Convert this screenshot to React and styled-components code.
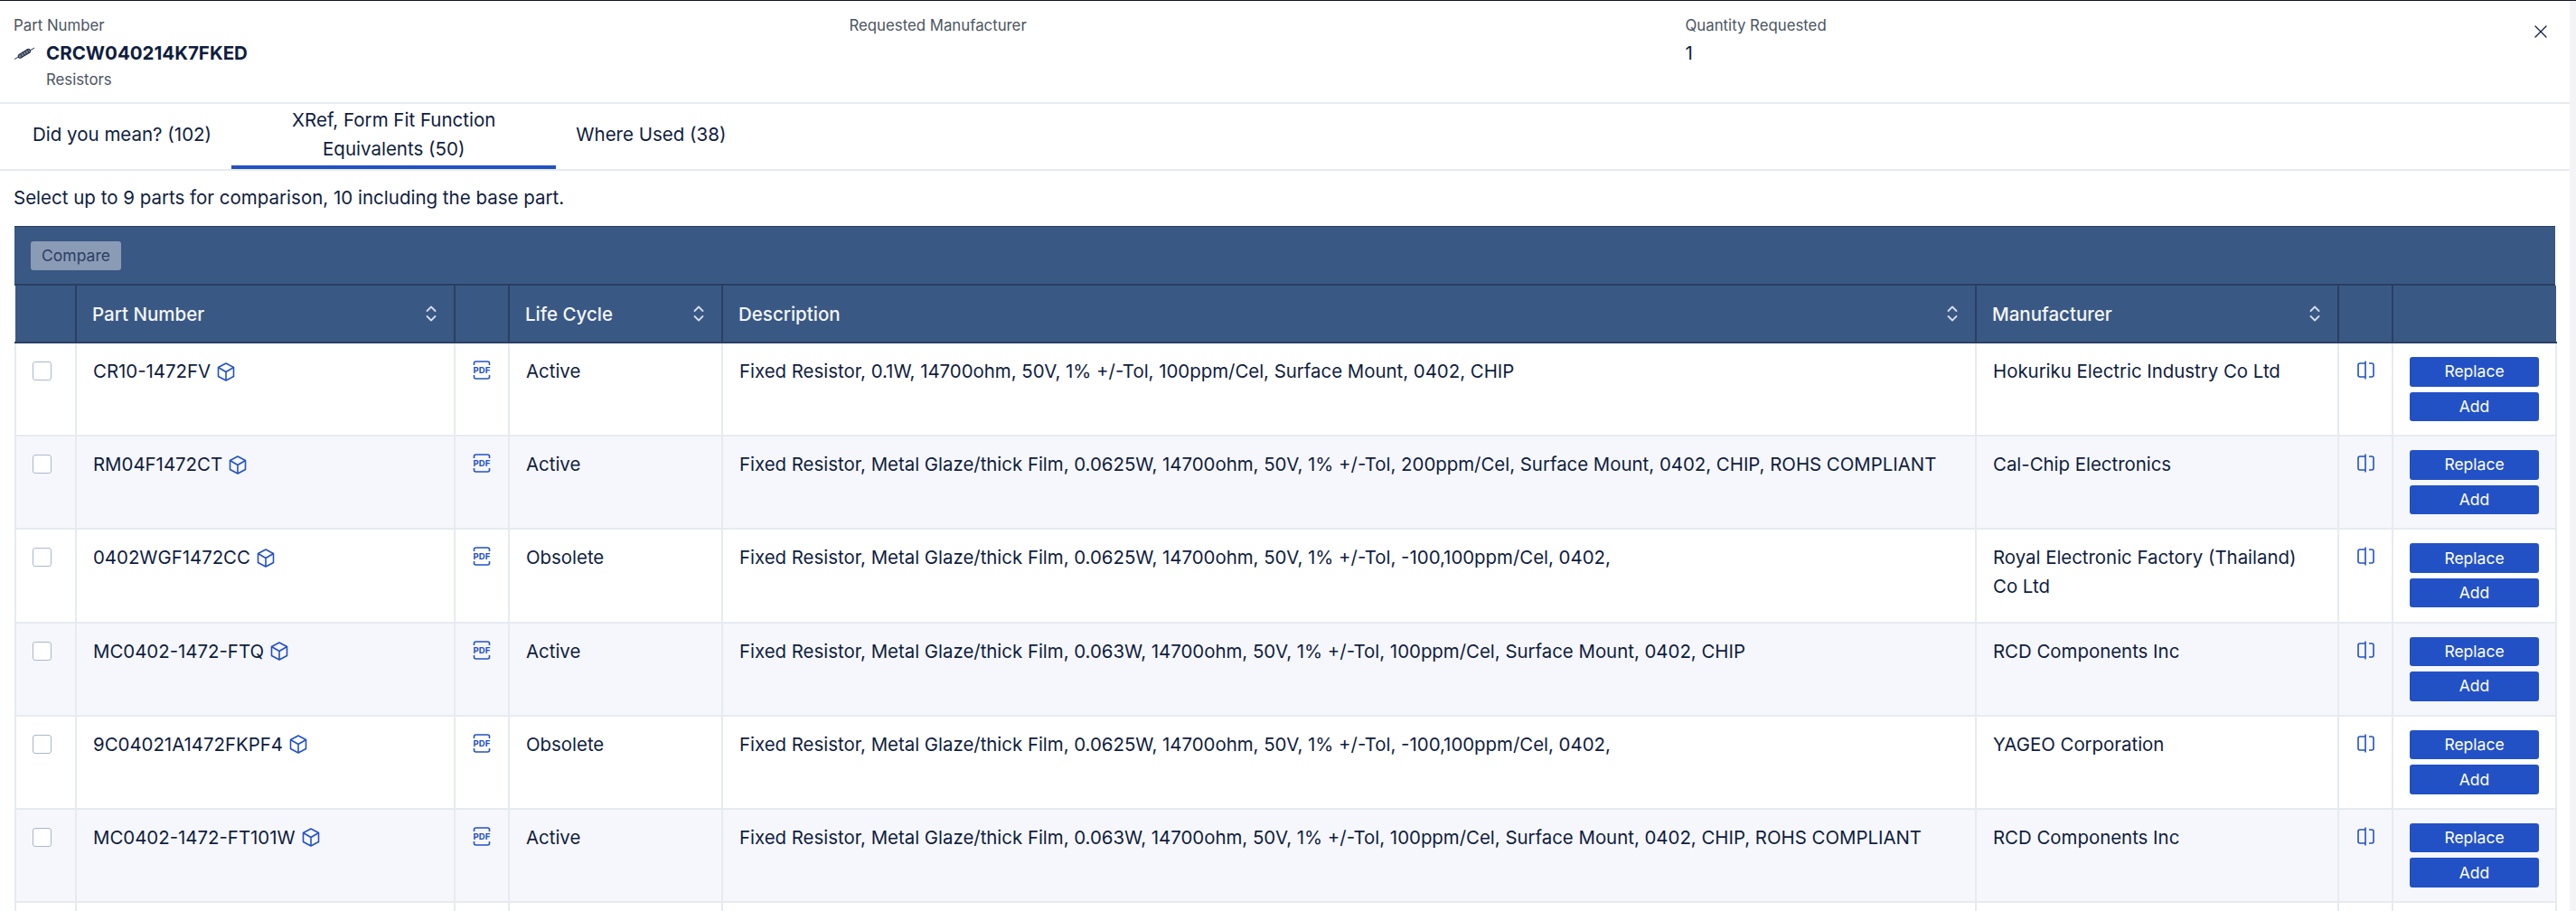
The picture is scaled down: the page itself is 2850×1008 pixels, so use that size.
import React from 'react'
import styled, { createGlobalStyle } from 'styled-components'
import { X } from 'lucide-react'

const parts = [
    { id: 1, part: 'CR10-1472FV', cycle: 'Active', desc: 'Fixed Resistor, 0.1W, 14700ohm, 50V, 1% +/-Tol, 100ppm/Cel, Surface Mount, 0402, CHIP', maker: 'Hokuriku Electric Industry Co Ltd' },
    { id: 2, part: 'RM04F1472CT', cycle: 'Active', desc: 'Fixed Resistor, Metal Glaze/thick Film, 0.0625W, 14700ohm, 50V, 1% +/-Tol, 200ppm/Cel, Surface Mount, 0402, CHIP, ROHS COMPLIANT', maker: 'Cal-Chip Electronics' },
    { id: 3, part: '0402WGF1472CC', cycle: 'Obsolete', desc: 'Fixed Resistor, Metal Glaze/thick Film, 0.0625W, 14700ohm, 50V, 1% +/-Tol, -100,100ppm/Cel, 0402,', maker: 'Royal Electronic Factory (Thailand) Co Ltd' },
    { id: 4, part: 'MC0402-1472-FTQ', cycle: 'Active', desc: 'Fixed Resistor, Metal Glaze/thick Film, 0.063W, 14700ohm, 50V, 1% +/-Tol, 100ppm/Cel, Surface Mount, 0402, CHIP', maker: 'RCD Components Inc' },
    { id: 5, part: '9C04021A1472FKPF4', cycle: 'Obsolete', desc: 'Fixed Resistor, Metal Glaze/thick Film, 0.0625W, 14700ohm, 50V, 1% +/-Tol, -100,100ppm/Cel, 0402,', maker: 'YAGEO Corporation' },
    { id: 6, part: 'MC0402-1472-FT101W', cycle: 'Active', desc: 'Fixed Resistor, Metal Glaze/thick Film, 0.063W, 14700ohm, 50V, 1% +/-Tol, 100ppm/Cel, Surface Mount, 0402, CHIP, ROHS COMPLIANT', maker: 'RCD Components Inc' },
]

const columns = [67, 419, 60, 236, 1387, 401, 60, 181]

const ResistorIcon = () => (
    <svg width="24" height="16" viewBox="0 0 24 16" fill="none" stroke="#26314d">
        <path d="M1 14.500L6 11.500M18 5L23 2" strokeWidth="1" />
        <path d="M6 9.500L15.500 3.500C18 2.800 19.500 5.500 18 7L8 13C5.500 14 4.500 11 6 9.500Z" fill="#7f889c" strokeWidth="1.200" />
        <path d="M7.500 8.500L9.500 12.200M10 6.800L12 10.600M12.500 5.200L14.500 9M15 3.800L17 7.500" strokeWidth="1.100" />
    </svg>
)

const CubeIcon = () => (
    <svg width="20" height="21" viewBox="0 0 20 21" fill="none" stroke="#2251c5" strokeWidth="1.600" strokeLinejoin="round">
        <path d="M10 1L18.500 5.500V15.500L10 20L1.500 15.500V5.500Z" />
        <path d="M1.500 5.500L10 10.500L18.500 5.500M10 10.500V20" />
    </svg>
)

const PdfIcon = () => (
    <svg width="20" height="21" viewBox="0 0 20 21" fill="none">
        <path d="M1.500 5V3C1.500 1.800 2.300 1 3.500 1H16.500C17.700 1 18.500 1.800 18.500 3V5M1.500 16V18C1.500 19.200 2.300 20 3.500 20H16.500C17.700 20 18.500 19.200 18.500 18V16" stroke="#2251c5" strokeWidth="1.600" />
        <text x="10" y="14" textAnchor="middle" fontFamily="Inter, sans-serif" fontSize="9.600" fontWeight="700" fill="#2251c5">PDF</text>
    </svg>
)

const CompareIcon = () => (
    <svg width="19" height="21" viewBox="0 0 19 21" fill="none" stroke="#2251c5" strokeWidth="1.600">
        <path d="M9 3H3C1.800 3 1 3.800 1 5V16C1 17.200 1.800 18 3 18H9M9 0.500V20.500" />
        <path d="M13 3H16C17.200 3 18 3.800 18 5V16C18 17.200 17.200 18 16 18H13" />
    </svg>
)

const SortIcon = () => (
    <svg width="14" height="20" viewBox="0 0 14 20" fill="none" stroke="#d5deec" strokeWidth="1.800" strokeLinecap="round" strokeLinejoin="round">
        <path d="M2.500 7L7 2.500L11.500 7M2.500 13L7 17.500L11.500 13" />
    </svg>
)

const App = () => {
    return <Page>
        <GlobalStyle />
        <TopLine />
        <Modal>
            <Summary>
                <SummaryColumn>
                    <FieldLabel>Part Number</FieldLabel>
                    <PartLine>
                        <ResistorIcon />
                        <PartName>CRCW040214K7FKED</PartName>
                    </PartLine>
                    <Category>Resistors</Category>
                </SummaryColumn>
                <SummaryColumn>
                    <FieldLabel>Requested Manufacturer</FieldLabel>
                </SummaryColumn>
                <SummaryColumn>
                    <FieldLabel>Quantity Requested</FieldLabel>
                    <Quantity>1</Quantity>
                </SummaryColumn>
                <CloseButton><X size={24} strokeWidth={1.300} /></CloseButton>
            </Summary>

            <Tabs>
                <Tab>Did you mean? (102)</Tab>
                <Tab $active>XRef, Form Fit Function<br />Equivalents (50)</Tab>
                <Tab>Where Used (38)</Tab>
            </Tabs>

            <Hint>Select up to 9 parts for comparison, 10 including the base part.</Hint>

            <TableWrap>
                <Toolbar>
                    <CompareButton>Compare</CompareButton>
                </Toolbar>
                <Table>
                    <colgroup>
                        {columns.map((width, i) => <col key={i} style={{ width }} />)}
                    </colgroup>
                    <thead>
                        <tr>
                            <HeadCell />
                            <HeadCell><HeadInner>Part Number<SortIcon /></HeadInner></HeadCell>
                            <HeadCell />
                            <HeadCell><HeadInner>Life Cycle<SortIcon /></HeadInner></HeadCell>
                            <HeadCell><HeadInner>Description<SortIcon /></HeadInner></HeadCell>
                            <HeadCell><HeadInner>Manufacturer<SortIcon /></HeadInner></HeadCell>
                            <HeadCell />
                            <HeadCell />
                        </tr>
                    </thead>
                    <tbody>
                        {parts.map(item => {
                            return (
                                <Row key={item.id}>
                                    <Cell><Checkbox /></Cell>
                                    <Cell><PartCell>{item.part}<CubeIcon /></PartCell></Cell>
                                    <Cell><IconCell><PdfIcon /></IconCell></Cell>
                                    <Cell>{item.cycle}</Cell>
                                    <Cell>{item.desc}</Cell>
                                    <MakerCell>{item.maker}</MakerCell>
                                    <Cell><IconCell><CompareIcon /></IconCell></Cell>
                                    <ActionCell>
                                        <ActionStack>
                                            <ActionButton>Replace</ActionButton>
                                            <ActionButton>Add</ActionButton>
                                        </ActionStack>
                                    </ActionCell>
                                </Row>
                            )
                        })}
                        <Row>
                            {columns.map((width, i) => <Cell key={i} />)}
                        </Row>
                    </tbody>
                </Table>
            </TableWrap>
        </Modal>
    </Page>
}

const GlobalStyle = createGlobalStyle`
    html, body {
        margin: 0;
        height: 100%;
        overflow: hidden;
    }

    body {
        font-family: Inter, "Liberation Sans", sans-serif;
        color: #0f1d3f;
        background: #f4f4f6;
    }

    * {
        box-sizing: border-box;
    }
`

const Page = styled.div`
    height: 1008px;
    overflow: hidden;
`

const TopLine = styled.div`
    height: 1px;
    background: #0d1526;
`

const Modal = styled.div`
    width: 2843px;
    height: 1007px;
    background: #ffffff;
    overflow: hidden;
`

const Summary = styled.div`
    position: relative;
    display: grid;
    grid-template-columns: 924.500px 925px 1fr;
    height: 114px;
    padding: 16px 15px 0;
    border-bottom: 2px solid #e6ebf1;
`

const SummaryColumn = styled.div`
    display: flex;
    flex-direction: column;
`

const FieldLabel = styled.div`
    font-size: 16.800px;
    line-height: 22px;
    color: #4b5563;
`

const PartLine = styled.div`
    display: flex;
    align-items: center;
    gap: 12px;
    height: 36px;
    margin-top: 2px;
`

const PartName = styled.div`
    font-size: 20.500px;
    line-height: 28px;
    font-weight: 700;
    color: #0f1d3f;
`

const Category = styled.div`
    margin-left: 36px;
    font-size: 16.800px;
    line-height: 22px;
    color: #4b5563;
`

const Quantity = styled.div`
    margin-top: 2px;
    font-size: 20.500px;
    line-height: 36px;
    color: #0f1d3f;
`

const CloseButton = styled.div`
    position: absolute;
    top: 22px;
    right: 20px;
    display: flex;
    color: #0f1d3f;
`

const Tabs = styled.div`
    display: flex;
    gap: 2px;
    height: 74px;
    padding-left: 16px;
    border-bottom: 2px solid #e6ebf1;
`

const Tab = styled.div`
    display: flex;
    align-items: center;
    justify-content: center;
    height: 72px;
    padding: 0 ${props => props.$active ? '67px' : '20px'};
    font-size: 20.500px;
    line-height: 32px;
    text-align: center;
    white-space: nowrap;
    color: #0f1d3f;
    border-bottom: 4px solid ${props => props.$active ? '#2251c5' : 'transparent'};
`

const Hint = styled.div`
    height: 61px;
    padding: 14px 15px 0;
    font-size: 20.500px;
    line-height: 32px;
    color: #0f1d3f;
`

const TableWrap = styled.div`
    width: 2811px;
    margin-left: 16px;
`

const Toolbar = styled.div`
    display: flex;
    align-items: center;
    height: 66px;
    padding-left: 18px;
    background: #3a5884;
    border-top: 1px solid #2a3f63;
    border-bottom: 2px solid #2a3f63;
`

const CompareButton = styled.div`
    display: flex;
    align-items: center;
    justify-content: center;
    width: 100px;
    height: 32px;
    border-radius: 3px;
    font-size: 17.500px;
    color: #2b3f63;
    background: #8a9bb6;
`

const Table = styled.table`
    width: 2811px;
    table-layout: fixed;
    border-collapse: collapse;
`

const HeadCell = styled.th`
    height: 63px;
    padding: 0 18px 0 17px;
    font-size: 20.500px;
    font-weight: 500;
    text-align: left;
    color: #f3f6fb;
    background: #3a5884;
    border-left: 2px solid #2a3f63;
    border-bottom: 2px solid #2a3f63;

    &:first-child {
        border-left: none;
    }
`

const HeadInner = styled.div`
    display: flex;
    align-items: center;
    justify-content: space-between;
`

const Row = styled.tr`
    height: 103.200px;

    &:nth-child(even) {
        background: #f6f7fc;
    }
`

const Cell = styled.td`
    padding: 15px 18px;
    vertical-align: top;
    font-size: 20.400px;
    line-height: 32px;
    color: #0f1d3f;
    border: 2px solid #e6ebf1;
`

const MakerCell = styled(Cell)`
    padding-right: 40px;
`

const Checkbox = styled.div`
    width: 21px;
    height: 21px;
    margin-top: 5px;
    border: 1px solid #a9b8cf;
    border-radius: 3px;
    background: #ffffff;
`

const PartCell = styled.div`
    display: flex;
    align-items: center;
    gap: 7px;
`

const IconCell = styled.div`
    display: flex;
    justify-content: center;
    height: 32px;
    padding-top: 4px;
`

const ActionCell = styled(Cell)`
    padding: 15px 18px 0;
`

const ActionStack = styled.div`
    display: flex;
    flex-direction: column;
    gap: 6px;
`

const ActionButton = styled.div`
    display: flex;
    align-items: center;
    justify-content: center;
    height: 32.500px;
    border-radius: 3px;
    font-size: 17.500px;
    line-height: 20px;
    color: #ffffff;
    background: #2251c5;
`

export default App
